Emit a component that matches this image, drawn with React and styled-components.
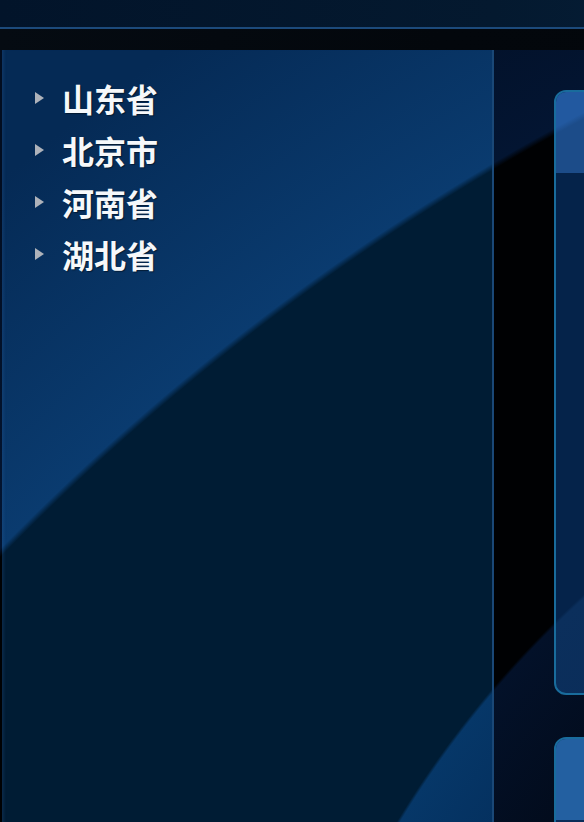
import React from "react";
import styled, { createGlobalStyle } from "styled-components";

const bg = (outerNear, outerFar, band, innerFar, innerEdge) => `
  radial-gradient(circle at 1259px 1340px, ${innerFar} 860px, ${innerEdge} 1003px, transparent 1006px),
  radial-gradient(circle at 1694px 2205px, ${band} 2363px, ${outerNear} 2369px, ${outerFar} 2640px)
`;

const Global = createGlobalStyle`
  html, body {
    margin: 0;
    padding: 0;
    width: 584px;
    height: 822px;
    overflow: hidden;
  }
  body {
    background: ${bg("#031532", "#020d20", "#000103", "#020b1b", "#031129")};
    background-attachment: fixed;
    font-family: "Noto Sans CJK SC", "Noto Sans", sans-serif;
  }
`;

const Page = styled.div`
  display: flex;
  flex-direction: column;
  width: 1100px;
  height: 822px;
`;

const TopBar = styled.header`
  flex-shrink: 0;
  height: 27px;
  border-bottom: 2px solid #1c4a7b;
  background: linear-gradient(90deg, #02142a 0%, #04192f 45%, #082746 100%);
`;

const DarkStrip = styled.div`
  flex-shrink: 0;
  height: 21px;
  background: linear-gradient(90deg, #050b12 0%, #03070c 40%, #02060b 100%);
`;

const Main = styled.div`
  display: flex;
  flex: 1;
  min-height: 0;
  gap: 60px;
  padding-left: 2px;
`;

const Sidebar = styled.aside`
  box-sizing: border-box;
  width: 492px;
  flex-shrink: 0;
  border-right: 2px solid #1a4877;
  padding-top: 22px;
  background: ${bg("#0a3b6f", "#052a55", "#001c34", "#032c59", "#063768")};
  background-attachment: fixed;
  box-shadow: inset 4px 0 3px -2px rgba(60, 110, 170, 0.18);
  display: flex;
  flex-direction: column;
`;

const TreeItem = styled.div`
  display: flex;
  align-items: center;
  height: 52px;
  padding-left: 33px;
  gap: 18px;
`;

const Caret = styled.span`
  width: 0;
  height: 0;
  border-top: 6.5px solid transparent;
  border-bottom: 6.5px solid transparent;
  border-left: 9px solid #aeb2ba;
`;

const Label = styled.span`
  color: #f6f8fa;
  font-family: "Noto Sans CJK SC", "Noto Sans", sans-serif;
  font-weight: 700;
  font-size: 32px;
  line-height: 1;
  text-shadow: 1px 1px 1px rgba(0, 0, 0, 0.45);
`;

const RightColumn = styled.div`
  display: flex;
  flex-direction: column;
  padding-top: 40px;
  gap: 42px;
  width: 480px;
  flex-shrink: 0;
`;

const Card = styled.section`
  box-sizing: border-box;
  height: ${(p) => p.$height}px;
  border: 2px solid #196c9c;
  border-radius: 12px;
  overflow: hidden;
  display: flex;
  flex-direction: column;
  background: ${bg("#082a55", "#082a55", "#05234a", "#0a2c58", "#0b2f5c")};
  background-attachment: fixed;
  flex-shrink: 0;
`;

const CardHeader = styled.div`
  height: 81px;
  flex-shrink: 0;
  background: ${bg("#2259a0", "#2259a0", "#1c4c89", "#2360a1", "#2360a1")};
  background-attachment: fixed;
`;

const provinces = ["山东省", "北京市", "河南省", "湖北省"];

export default function App() {
  return (
    <>
      <Global />
      <Page>
        <TopBar />
        <DarkStrip />
        <Main>
          <Sidebar>
            {provinces.map((p) => (
              <TreeItem key={p}>
                <Caret />
                <Label>{p}</Label>
              </TreeItem>
            ))}
          </Sidebar>
          <RightColumn>
            <Card $height={605}>
              <CardHeader />
            </Card>
            <Card $height={300}>
              <CardHeader />
            </Card>
          </RightColumn>
        </Main>
      </Page>
    </>
  );
}
